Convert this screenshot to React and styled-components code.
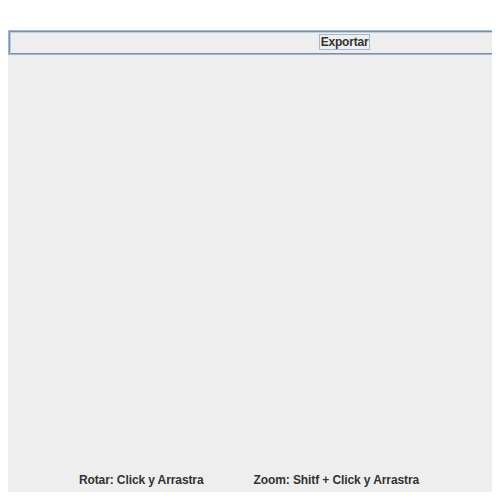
import React from 'react';
import styled, { createGlobalStyle } from 'styled-components';

const GlobalStyle = createGlobalStyle`
  html, body {
    margin: 0;
    padding: 0;
    background: #ffffff;
  }
`;

const Page = styled.div`
  width: 500px;
  height: 500px;
  padding: 30px 8px 8px 8px;
  box-sizing: border-box;
  font-family: "Liberation Sans", Arial, sans-serif;
`;

const Panel = styled.div`
  height: 100%;
  background: #eeeeee;
  display: flex;
  flex-direction: column;
  overflow: hidden;
`;

const Toolbar = styled.div`
  height: 25px;
  box-sizing: border-box;
  display: flex;
  align-items: center;
  padding-left: 310px;
  border-top: 1px solid #a3b8cc;
  border-bottom: 1px solid #a3b8cc;
  border-left: 1px solid #a3b8cc;
  box-shadow: inset 1px 1px 0 #7a8fae, inset 2px 2px 0 #b8cfe5, inset 0 -1px 0 #7a8fae;
`;

const Button = styled.button`
  height: 16px;
  width: 51px;
  padding: 0;
  margin-top: -1px;
  background: #eeeeee;
  border: 1px solid #a8b8cc;
  font-family: inherit;
  font-size: 12px;
  font-weight: bold;
  color: #333333;
  letter-spacing: -0.2px;
  line-height: 14px;
`;

const Canvas = styled.div`
  flex: 1;
`;

const Footer = styled.div`
  display: flex;
  justify-content: center;
  gap: 50px;
  height: 19px;
  padding-right: 2px;
`;

const Hint = styled.span`
  font-size: 12px;
  font-weight: bold;
  color: #333333;
  letter-spacing: -0.1px;
  line-height: 14px;
`;

export default function App() {
  return (
    <Page>
      <GlobalStyle />
      <Panel>
        <Toolbar>
          <Button>Exportar</Button>
        </Toolbar>
        <Canvas />
        <Footer>
          <Hint>Rotar: Click y Arrastra</Hint>
          <Hint>Zoom: Shitf + Click y Arrastra</Hint>
        </Footer>
      </Panel>
    </Page>
  );
}
